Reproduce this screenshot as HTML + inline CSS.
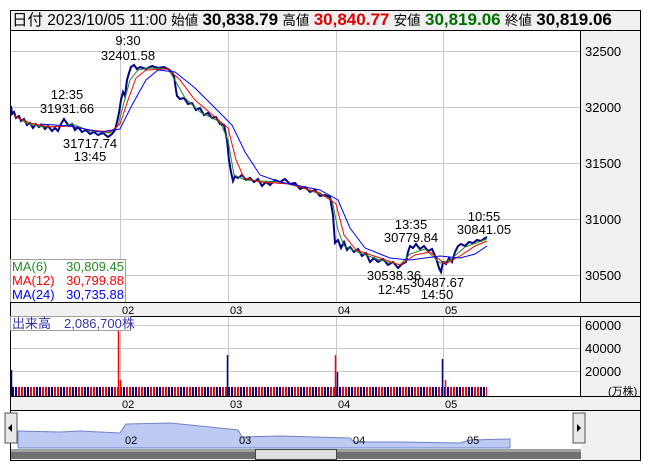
<!DOCTYPE html>
<html><head><meta charset="utf-8"><style>
body{margin:0;background:#fff;width:653px;height:470px;overflow:hidden;font-family:"Liberation Sans","Noto Sans CJK JP",sans-serif}
.t{position:absolute;font-size:13px;color:#000;white-space:nowrap}
</style></head><body>
<svg width="653" height="470" style="position:absolute;left:0;top:0" font-family="Liberation Sans, Noto Sans CJK JP, sans-serif">
<rect x="10.5" y="10.5" width="630" height="20" fill="#f0f0f0" stroke="#000"/>
<rect x="10.5" y="30.5" width="630" height="272" fill="#fff" stroke="#000"/>
<rect x="580.5" y="30.5" width="60" height="272" fill="#f0f0f0" stroke="#000"/>
<g stroke="#c8c8c8" stroke-width="1">
<line x1="11" y1="51.5" x2="580" y2="51.5"/><line x1="11" y1="107.5" x2="580" y2="107.5"/><line x1="11" y1="163.5" x2="580" y2="163.5"/><line x1="11" y1="219.5" x2="580" y2="219.5"/><line x1="11" y1="275.5" x2="580" y2="275.5"/>
<line x1="120.5" y1="31" x2="120.5" y2="302"/><line x1="228.5" y1="31" x2="228.5" y2="302"/><line x1="336.5" y1="31" x2="336.5" y2="302"/><line x1="443.5" y1="31" x2="443.5" y2="302"/>
</g>
<g font-size="13" fill="#000">
<text x="585" y="56">32500</text><text x="585" y="112">32000</text><text x="585" y="168">31500</text><text x="585" y="224">31000</text><text x="585" y="280">30500</text>
</g>
<polyline fill="none" stroke="#00008b" stroke-width="2" points="11,106 12,114 14,112 16,118 19,116 21,121 24,119 27,125 30,123 33,128 36,124 39,127 42,125 45,129 48,126 52,131 55,128 58,131 61,124 64,119 66,122 69,126 72,124 75,130 78,127 82,132 86,130 90,134 94,132 98,135 103,133 108,137 112,134 115,130 117,122 119,113 121,100 123,92 125,96 127,80 129,73 131,67 134,65 137,69 140,67 146,69 152,66 158,68 164,67 168,69 172,72 174,76 176,90 177,96 180,99 184,98 188,104 192,103 196,110 200,108 204,115 208,113 212,118 216,117 220,124 224,125 227,140 229,160 231,172 233,181 235,176 238,178 242,175 246,180 250,178 254,182 258,179 262,186 266,182 270,185 275,180 280,182 285,179 290,184 295,183 300,189 305,187 310,192 315,190 320,196 325,195 330,197 333,215 335,243 338,240 341,248 344,242 347,250 350,247 354,252 358,249 362,256 366,253 370,262 374,258 378,262 383,259 388,265 393,262 398,268 402,264 406,262 408,252 410,246 413,248 416,244 420,249 424,246 428,251 432,249 436,258 439,268 441,272 443,262 446,264 449,258 452,262 455,252 458,246 461,244 465,246 469,242 473,243 477,240 481,241 485,238 487,237"/>
<polyline fill="none" stroke="#228b22" stroke-width="1" points="14,115 28,124 45,127 62,126 72,124 90,131 110,133 118,126 124,102 130,80 138,70 150,68 168,69 176,82 185,98 200,112 220,122 228,140 234,175 245,180 260,181 280,182 300,187 320,194 332,200 338,230 344,246 360,253 380,260 400,265 410,254 425,249 440,263 450,260 465,247 487,239"/>
<polyline fill="none" stroke="#ff0000" stroke-width="1" points="14,116 30,123 50,127 70,126 90,130 110,132 120,124 128,100 136,78 146,70 168,69 180,80 195,100 215,117 228,128 236,160 244,178 260,182 290,184 320,193 336,204 344,235 356,250 380,258 400,265 415,255 430,252 445,264 460,256 475,246 487,241"/>
<polyline fill="none" stroke="#0000ff" stroke-width="1" points="40,124 70,126 100,132 120,129 132,105 146,80 158,70 175,72 195,88 215,108 232,125 245,152 260,175 280,182 320,190 338,200 350,228 365,248 390,258 410,260 440,256 460,258 475,254 487,246"/>
<g font-size="13" fill="#000" text-anchor="middle">
<text x="128" y="45">9:30</text><text x="128" y="60">32401.58</text>
<text x="67" y="99">12:35</text><text x="67" y="113">31931.66</text>
<text x="90" y="148">31717.74</text><text x="90" y="161">13:45</text>
<text x="411" y="229">13:35</text><text x="411" y="242">30779.84</text>
<text x="484" y="221">10:55</text><text x="484" y="234">30841.05</text>
<text x="394" y="280">30538.36</text><text x="394" y="294">12:45</text>
<text x="437" y="287">30487.67</text><text x="437" y="299">14:50</text>
</g>
<rect x="10.5" y="259.5" width="115" height="43" fill="#fff" stroke="#a0a0a0"/>
<g font-size="13">
<text x="12" y="271" fill="#228b22">MA(6)</text><text x="124" y="271" fill="#228b22" text-anchor="end">30,809.45</text>
<text x="12" y="285" fill="#ff0000">MA(12)</text><text x="124" y="285" fill="#ff0000" text-anchor="end">30,799.88</text>
<text x="12" y="299" fill="#0000ff">MA(24)</text><text x="124" y="299" fill="#0000ff" text-anchor="end">30,735.88</text>
</g>
<rect x="10.5" y="302.5" width="630" height="14" fill="#f0f0f0" stroke="#000"/>
<g font-size="11" fill="#000"><text x="122" y="314">02</text><text x="230" y="314">03</text><text x="338" y="314">04</text><text x="445" y="314">05</text></g>
<rect x="10.5" y="316.5" width="630" height="80" fill="#fff" stroke="#000"/>
<rect x="580.5" y="316.5" width="60" height="80" fill="#f0f0f0" stroke="#000"/>
<g stroke="#c8c8c8"><line x1="11" y1="325.5" x2="580" y2="325.5"/><line x1="11" y1="348.5" x2="580" y2="348.5"/><line x1="11" y1="371.5" x2="580" y2="371.5"/>
<line x1="228.5" y1="317" x2="228.5" y2="396"/><line x1="336.5" y1="317" x2="336.5" y2="396"/><line x1="443.5" y1="317" x2="443.5" y2="396"/><line x1="120.5" y1="317" x2="120.5" y2="396"/></g>
<defs><pattern id="vb" width="12" height="10" patternUnits="userSpaceOnUse"><rect x="0" width="2" height="10" fill="#00008b"/><rect x="3" width="2" height="10" fill="#00008b"/><rect x="6" width="2" height="10" fill="#ff0000"/><rect x="9" width="2" height="10" fill="#ff0000"/></pattern></defs>
<rect x="12" y="387" width="475" height="9" fill="url(#vb)"/>
<g stroke-width="1.5"><line x1="11.5" y1="370" x2="11.5" y2="396" stroke="#00008b"/><line x1="118.5" y1="331" x2="118.5" y2="396" stroke="#ff0000"/><line x1="120.5" y1="380" x2="120.5" y2="396" stroke="#ff0000"/><line x1="227.5" y1="355" x2="227.5" y2="396" stroke="#00008b"/><line x1="335.5" y1="355" x2="335.5" y2="396" stroke="#ff0000"/><line x1="337.5" y1="372" x2="337.5" y2="396" stroke="#00008b"/><line x1="442.5" y1="359" x2="442.5" y2="396" stroke="#00008b"/><line x1="445.5" y1="380" x2="445.5" y2="396" stroke="#ff0000"/></g>
<g font-size="13"><text x="585" y="330">60000</text><text x="585" y="353">40000</text><text x="585" y="376">20000</text><text x="608" y="395" font-size="11">(万株)</text></g>
<rect x="10.5" y="316.5" width="120" height="14" fill="#fff" stroke="#a0a0a0"/>
<text x="12" y="328" font-size="13" fill="#3333aa">出来高　2,086,700株</text>
<rect x="10.5" y="396.5" width="630" height="14" fill="#f0f0f0" stroke="#000"/>
<g font-size="11"><text x="122" y="408">02</text><text x="230" y="408">03</text><text x="338" y="408">04</text><text x="445" y="408">05</text></g>
<rect x="10.5" y="410.5" width="630" height="50" fill="#f0f0f0" stroke="#000"/>
<rect x="11" y="411" width="570" height="38" fill="#fff"/>
<polygon fill="#bccaf4" stroke="#7080c8" stroke-width="1" points="18,448 18,431 60,432 80,431 120,433 126,424 170,423 200,426 238,430 242,437 280,436 350,438 354,442 400,442 460,443 470,440 510,439 510,448"/>
<g font-size="11"><text x="125" y="444">02</text><text x="239" y="444">03</text><text x="353" y="444">04</text><text x="467" y="444">05</text></g>
<rect x="5" y="413" width="12" height="30" fill="#e8e8e8" stroke="#555"/><polygon points="8,428 12,424 12,432" fill="#000"/>
<rect x="573" y="413" width="12" height="30" fill="#e8e8e8" stroke="#555"/><polygon points="581,428 577,424 577,432" fill="#000"/>
<rect x="11" y="449" width="570" height="10" fill="#707070"/>
<rect x="11" y="449" width="570" height="3" fill="#a0a0a0"/>
<rect x="255.5" y="449.5" width="81" height="10" fill="#e0e0e0" stroke="#444"/>
</svg>
<div class="t" style="left:12px;top:10px;font-size:15.5px;line-height:20px">日付 2023/10/05 11:00 <span style="font-size:13.5px">始値</span> <b style="font-size:17px">30,838.79</b> <span style="font-size:13.5px">高値</span> <b style="color:#e00000;font-size:17px">30,840.77</b> <span style="font-size:13.5px">安値</span> <b style="color:#007000;font-size:17px">30,819.06</b> <span style="font-size:13.5px">終値</span> <b style="font-size:17px">30,819.06</b></div>
</body></html>
